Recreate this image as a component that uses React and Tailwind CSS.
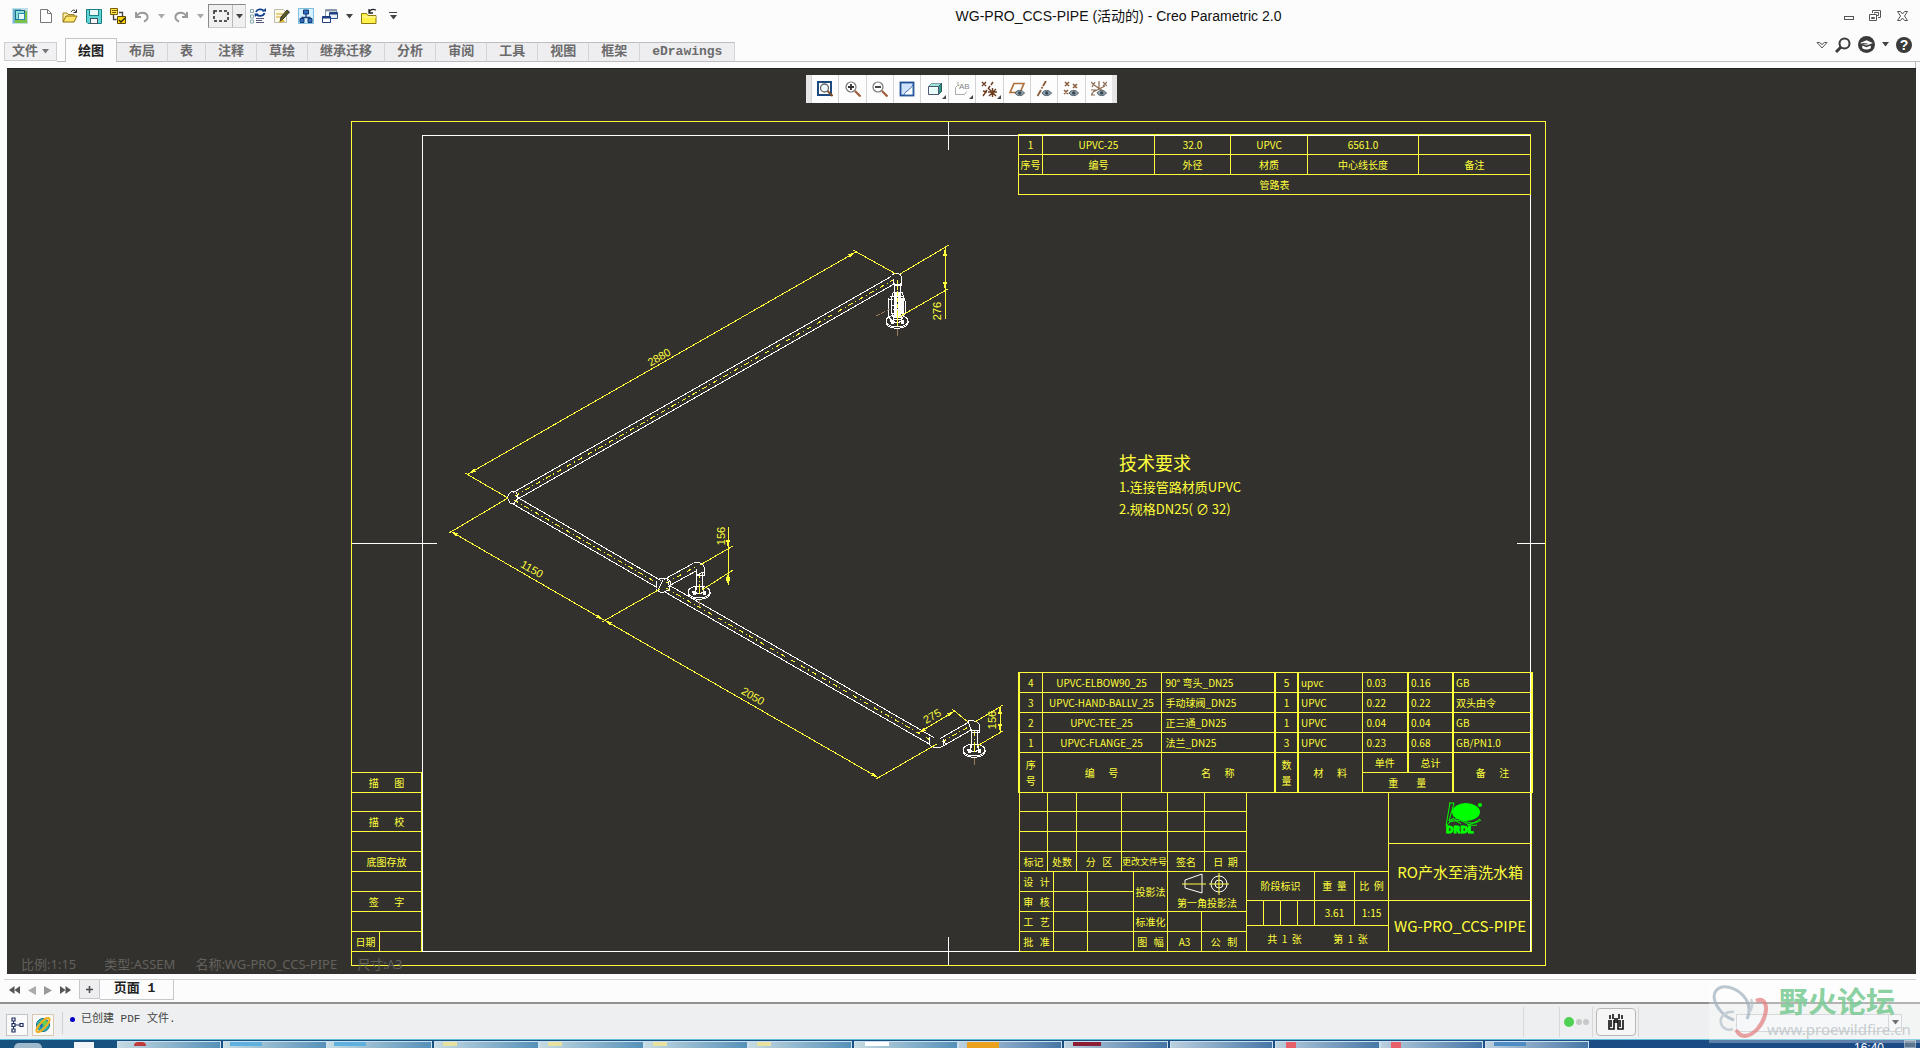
import React from "react";

const CAD = "font-['Noto_Sans_CJK_SC',sans-serif]";
const UI = "font-['Liberation_Mono','Noto_Sans_CJK_SC',monospace]";

/* ---------- small icons ---------- */

function Svg({ size = 16, children, className = "" }) {
  return (
    <svg width={size} height={size} viewBox="0 0 16 16" fill="none" className={"shrink-0 " + className} aria-hidden="true">
      {children}
    </svg>
  );
}

function Caret({ color = "#444" }) {
  return (
    <svg width="7" height="5" viewBox="0 0 7 5" className="shrink-0" aria-hidden="true">
      <path d="M0 0h7L3.5 4.5z" fill={color} />
    </svg>
  );
}

const Icons = {
  creo: (
    <Svg>
      <rect x="0" y="0" width="16" height="16" fill="#bfe0ea" />
      <path d="M1 1h8v14H1z" fill="#6fb7cf" />
      <path d="M3 12h12v3H3zM12 3h3v12h-3z" fill="#7cc04a" />
      <rect x="3.500" y="2.500" width="9" height="9" fill="#8fe0da" stroke="#1d6a86" />
      <rect x="6.500" y="5.500" width="6" height="6" fill="#e6fbf8" stroke="#2a8ab0" />
    </Svg>
  ),
  file: (
    <Svg>
      <path d="M2.500 1.500h7l4 4v9h-11z" fill="#fff" stroke="#777" />
      <path d="M9.500 1.500v4h4" stroke="#777" />
    </Svg>
  ),
  open: (
    <Svg>
      <path d="M1 14V5h4l1 1.500h6V9" fill="#fff2a8" stroke="#a08020" />
      <path d="M1 14l3-6h11l-3 6z" fill="#ffe46a" stroke="#8a6d10" />
      <path d="M9 4c1.500-2.500 4-2.500 5 0M14.500 1.500V4.500H11.500" stroke="#333" />
    </Svg>
  ),
  save: (
    <Svg>
      <path d="M.5 1.500h15v14H2l-1.500-1.500z" fill="#5fd6d4" stroke="#1b7f86" />
      <rect x="3.500" y="1.500" width="9" height="6" fill="#e9f8f8" stroke="#1b7f86" />
      <rect x="4.500" y="10.500" width="7" height="5" fill="#f5f5f5" stroke="#456" />
    </Svg>
  ),
  regen: (
    <Svg>
      <path d="M.5.500h7v6h-7z" fill="#ffe34d" stroke="#7a6000" />
      <path d="M2 2.500h5M2 4.500h4" stroke="#7a6000" />
      <path d="M7.500 8.500h8v7h-8z" fill="#ffd400" stroke="#5a4800" />
      <path d="M9 12l2 2 4-4" stroke="#222" strokeWidth="1.400" />
      <path d="M3.500 7v4.500h3M9 4.500h3.500V8" stroke="#444" strokeWidth="1.300" />
    </Svg>
  ),
  undo: (
    <Svg>
      <path d="M2 4v5h5M2.500 8.500C5 3.500 12 3.500 13.500 8c.5 3-1 4.500-3.500 5.500" stroke="#9a9a9a" strokeWidth="2" />
    </Svg>
  ),
  redo: (
    <Svg>
      <path d="M14 4v5H9M13.500 8.500C11 3.500 4 3.500 2.500 8c-.5 3 1 4.500 3.500 5.500" stroke="#9a9a9a" strokeWidth="2" />
    </Svg>
  ),
  update: (
    <Svg>
      <path d="M.5 1.500h3v3h-3zM.5 7h3v3h-3zM.5 12h3v3h-3z" stroke="#8aa" />
      <path d="M6 10.500h8M6 12.500h6M6 14.500h8" stroke="#557" />
      <path d="M6 4c1-3 6-3.500 8-1M14.500 5c-1 3.500-6 3.500-8 1.500" stroke="#0e3f8c" strokeWidth="1.800" />
      <path d="M12 3.500h4V0zM4.500 5.500h4L5 9z" fill="#0e3f8c" />
    </Svg>
  ),
  pen: (
    <Svg>
      <path d="M.5 1.500h9l3 3v10h-12z" fill="#fffbe0" stroke="#bbb" />
      <path d="M2 6h7M2 9h6" stroke="#d6a030" />
      <path d="M15.500 4L9 11l-3 3 1-5 6-7z" fill="#5b5b20" stroke="#333" />
      <path d="M4 15l5-3.500 2 2z" fill="#e0b020" />
    </Svg>
  ),
  model: (
    <Svg>
      <rect x=".5" y=".5" width="15" height="15" fill="#d6f1ff" stroke="#7fc0e0" />
      <path d="M8 6v3M4 12V9.500h8V12" stroke="#1c3f7c" strokeWidth="1.300" />
      <path d="M5.500 2h5v4h-5zM2 10.500h4v4H2zM10 10.500h4v4h-4z" fill="#2f6fc4" stroke="#16386c" />
    </Svg>
  ),
  windows: (
    <Svg>
      <path d="M3.500 1.500h11v8h-11z" fill="#fff" stroke="#8899aa" />
      <path d="M7.500 4.500h8v6h-8z" fill="#e8eef8" stroke="#2a4f94" />
      <path d="M.5 8.500h8v6h-8z" fill="#fff" stroke="#1d3f80" />
      <path d="M.5 9.500h8M7.500 5.500h8" stroke="#1d3f80" strokeWidth="2" />
      <path d="M3.500 2.500h11" stroke="#8899aa" strokeWidth="2" />
    </Svg>
  ),
  folder: (
    <Svg>
      <path d="M.5 5.500h5l1.500 2h8v8H.5z" fill="#fff04a" stroke="#8a7a10" />
      <path d="M1 9h14" stroke="#fff9b0" />
      <path d="M8 4.500c1-3 4-3.500 7-2.500M8 1v4h4" stroke="#222" strokeWidth="1.300" />
    </Svg>
  ),
};

const sep = <span className="h-6 w-px shrink-0 bg-[#cfcfc0]" />;

function QuickButton({ label, children }) {
  return (
    <button aria-label={label} className="flex h-5 items-center justify-center">
      {children}
    </button>
  );
}

function QuickAccess() {
  return (
    <div className="flex h-8 shrink-0 items-center pl-3">
      <QuickButton label="Creo">{Icons.creo}</QuickButton>
      <span className="ml-1">{sep}</span>
      <div className="ml-1.5 flex items-center gap-2">
        <QuickButton label="新建">{Icons.file}</QuickButton>
        <QuickButton label="打开">{Icons.open}</QuickButton>
        <QuickButton label="保存">{Icons.save}</QuickButton>
        <QuickButton label="重新生成">{Icons.regen}</QuickButton>
        <QuickButton label="撤消">{Icons.undo}</QuickButton>
        <Caret color="#aaa" />
        <QuickButton label="重做">{Icons.redo}</QuickButton>
        <Caret color="#aaa" />
      </div>
      <button aria-label="选择框" className="ml-1 flex h-6 items-stretch border border-t-[#888] border-r-[#ccc] border-b-[#ccc] border-l-[#888] bg-[#f0f0f0]">
        <span className="flex w-[23px] items-center justify-center">
          <svg width="16" height="12" viewBox="0 0 16 12" fill="none" aria-hidden="true">
            <rect x="1" y="1" width="14" height="10" stroke="#222" strokeWidth="1.500" strokeDasharray="3 2" />
          </svg>
        </span>
        <span className="flex w-[13px] items-center justify-center border-l border-[#bbb]">
          <Caret />
        </span>
      </button>
      <div className="ml-1 flex items-center gap-2">
        <QuickButton label="更新">{Icons.update}</QuickButton>
        <QuickButton label="编辑">{Icons.pen}</QuickButton>
        <QuickButton label="模型">{Icons.model}</QuickButton>
        <QuickButton label="窗口">{Icons.windows}</QuickButton>
        <Caret />
        <QuickButton label="关闭窗口">{Icons.folder}</QuickButton>
      </div>
      <span className="ml-1">{sep}</span>
      <button aria-label="自定义" className="ml-2 flex flex-col items-center gap-0.5">
        <span className="h-px w-2 bg-[#444]" />
        <Caret />
      </button>
    </div>
  );
}

function TitleBar() {
  return (
    <header className="flex h-8 items-center">
      <QuickAccess />
      <h1 className="flex-1 text-center font-['Liberation_Sans','Noto_Sans_CJK_SC',sans-serif] text-[14px] leading-4 text-[#111]">
        WG-PRO_CCS-PIPE (活动的) - Creo Parametric 2.0
      </h1>
      <div className="flex w-20 shrink-0 items-center gap-3.5 pl-1">
        <button aria-label="最小化" className="flex h-4 items-end pb-1">
          <span className="h-1 w-2.5 border border-[#555]" />
        </button>
        <button aria-label="还原">
          <svg width="14" height="14" viewBox="0 0 14 14" fill="none" aria-hidden="true">
            <path d="M4.500 4V1.500h8v7H10M6.500 4.500v-1h4v3H9" stroke="#555" />
            <path d="M1.500 5.500h7v6h-7zM3.500 8.500h3v1h-3z" stroke="#555" />
          </svg>
        </button>
        <button aria-label="关闭">
          <svg width="13" height="12" viewBox="0 0 13 12" fill="none" aria-hidden="true">
            <path d="M1.500 1.500h3l2 2.500 2-2.500h3L8.500 6l3 4.500h-3l-2-2.500-2 2.500h-3l3-4.500z" stroke="#555" />
          </svg>
        </button>
      </div>
    </header>
  );
}

const TABS = ["布局", "表", "注释", "草绘", "继承迁移", "分析", "审阅", "工具", "视图", "框架", "eDrawings"];

function Ribbon() {
  return (
    <nav className={"flex h-[30px] items-end pl-1 text-[13px] leading-4 font-bold text-[#6b6b6b] " + UI}>
      <button className="mb-px flex h-[19px] items-center border border-[#cfcfcf] bg-[#f1f1f3] px-[7px]">
        文件
        <span className="ml-1">
          <Caret color="#777" />
        </span>
      </button>
      <div className="flex h-6 w-2 shrink-0 border-b border-[#bdbdbd]" />
      <button className="h-6 border border-b-0 border-[#c4c4c4] bg-[#fcfcfc] px-3 pt-0.5 text-[#222]">绘图</button>
      {TABS.map((t) => (
        <button key={t} className="h-5 border-y border-r border-[#bdbdbd] border-r-[#d4d4d8] bg-[#eeeef1] px-3">
          {t}
        </button>
      ))}
      <div className="flex h-6 flex-1 items-start justify-end border-b border-[#bdbdbd] pr-2">
        <div className="-mt-0.5 flex items-center gap-[7px]">
          <button aria-label="折叠">
            <svg width="12" height="8" viewBox="0 0 12 8" fill="none" aria-hidden="true">
              <path d="M1 1.500h2.500l2.500 2 2.500-2H11L6 7z" stroke="#555" />
            </svg>
          </button>
          <button aria-label="搜索">
            <Svg>
              <circle cx="9.500" cy="6.500" r="5" stroke="#3b3b3b" strokeWidth="2" />
              <path d="M6 10l-5 5" stroke="#3b3b3b" strokeWidth="3" />
            </Svg>
          </button>
          <button aria-label="学习">
            <Svg size={17}>
              <circle cx="8" cy="8" r="8" fill="#3b3b3b" />
              <path d="M2 6.500L8 4l6 2.500L8 9z" fill="#fff" />
              <path d="M4 9v2.500c2.500 1.500 5.500 1.500 8 0V9l-4 1.500z" fill="#fff" />
              <path d="M4 7l5 .5" stroke="#3b3b3b" />
            </Svg>
          </button>
          <Caret />
          <button aria-label="帮助" className="flex size-4 items-center justify-center rounded-full bg-[#3b3b3b] font-['Liberation_Sans',sans-serif] text-[14px] leading-4 text-white">
            ?
          </button>
        </div>
      </div>
    </nav>
  );
}

/* ---------- graphics toolbar ---------- */

const eye = (
  <g>
    <path d="M6 12c2-3.500 7-3.500 9.500 0-2.500 3.500-7.500 3.500-9.500 0z" fill="#8fa0ac" stroke="#56646e" />
    <circle cx="10.700" cy="12" r="1.700" fill="#3a4750" />
  </g>
);

const VIEW_TOOLS = [
  ["重新调整", <Svg><rect x="1" y="1" width="13" height="13" fill="#fff" stroke="#1c4a80" strokeWidth="2" /><circle cx="7.500" cy="7" r="4" fill="#eef6ff" stroke="#666" strokeWidth="1.300" /><path d="M10.500 10l5 5" stroke="#7a4a2a" strokeWidth="2" /></Svg>],
  ["放大", <Svg><circle cx="6" cy="6" r="5" fill="#fff" stroke="#777" strokeWidth="1.200" /><path d="M3 6h6M6 3v6" stroke="#333" strokeWidth="1.800" /><path d="M10 10l5.500 5.500" stroke="#a05a3a" strokeWidth="2.200" /></Svg>],
  ["缩小", <Svg><circle cx="6" cy="6" r="5" fill="#fff" stroke="#777" strokeWidth="1.200" /><path d="M3 6h6" stroke="#333" strokeWidth="1.800" /><path d="M10 10l5.500 5.500" stroke="#a05a3a" strokeWidth="2.200" /></Svg>],
  ["重画", <Svg><rect x="1.500" y="1.500" width="13" height="13" fill="#cfe2fb" stroke="#1f4f94" strokeWidth="1.800" /><path d="M5 14c1-4 4-3 9-10v10z" fill="#fff" stroke="#3b6aa8" /></Svg>],
  ["显示样式", <Svg><path d="M1.500 5.500l3-3h10v8l-3 3h-10z" fill="#e8fffa" stroke="#557" /><path d="M1.500 5.500l3-3h10l-3 3z" fill="#9be3d4" /><path d="M11.500 5.500l3-3v8l-3 3z" fill="#2f9a86" stroke="#2a5a5a" /><path d="M1.500 5.500h10v8" stroke="#557" /></Svg>],
  ["注释显示", <Svg><path d="M1.500 13.500v-7l2-2h2M1.500 13.500h9l2-3M4 4V1" stroke="#aaa" /><text x="5" y="8" fontSize="8" fill="#888" fontFamily="Liberation Sans, sans-serif">AB</text></Svg>],
  ["基准显示", <Svg><path d="M1 1l4 4M5 1L1 5M12 1l-2 3M9 5L7 8M6 9l-4 6M2 10l4 1M8 8l7 7M15 8l-7 7M7 11h9M11.500 7v9" stroke="#6b3d1e" strokeWidth="1.400" /></Svg>],
  ["平面显示", <Svg><path d="M5 2.500h10l-4 9H1z" fill="#fff" stroke="#b0703c" strokeWidth="1.700" />{eye}</Svg>],
  ["轴显示", <Svg><path d="M10 0L7 5M6.500 6l-1 1.500M5 9l-3.500 6" stroke="#8a5a38" strokeWidth="1.800" />{eye}</Svg>],
  ["点显示", <Svg><path d="M2 1l4 4M6 1L2 5M10 3l4 4M14 3l-4 4M1 9l4 4M5 9l-4 4" stroke="#8a5a38" strokeWidth="1.500" />{eye}</Svg>],
  ["坐标系显示", <Svg><path d="M0 1l3 3M4 1L1 6M12 1l4 4M16 1l-4 4M8 0v8M2 11l12-6M3 4l9 6M0 9h4l-4 5h4" stroke="#8a6a50" strokeWidth="1.200" />{eye}</Svg>],
];

function ViewToolbar() {
  return (
    <div className="relative z-10 mt-1.5 flex h-7 w-[311px] border-x-[5px] border-[#e6e6e6] bg-[#fdfdfd]" role="toolbar">
      {VIEW_TOOLS.map(([label, icon], i) => (
        <button key={label} aria-label={label} className="relative flex flex-1 items-center justify-center border-l border-[#d4d4d4]">
          {icon}
          {i > 3 && i < 7 && (
            <span className="absolute right-0.5 bottom-1 size-0 border-b-4 border-l-4 border-b-[#444] border-l-transparent" />
          )}
        </button>
      ))}
    </div>
  );
}

/* ---------- drawing sheet ---------- */

const Y = "#ffff3c";

function Table({ cols, children, className = "" }) {
  return (
    <table className={"table-fixed border-collapse text-center text-[10px] leading-3 text-[#ffff3c] " + CAD + " " + className}>
      <colgroup>
        {cols.map((c, i) => (
          <col key={i} className={c} />
        ))}
      </colgroup>
      <tbody>{children}</tbody>
    </table>
  );
}

function C({ h = "h-5", className = "", ...rest }) {
  return <td className={"border border-[#ffff3c] p-0 whitespace-pre " + h + " " + className} {...rest} />;
}

function PipeTable() {
  return (
    <Table className="absolute top-[12px] right-[14px] w-[512px]" cols={["w-[24px]", "w-[112px]", "w-[76px]", "w-[77px]", "w-[111px]", "w-[112px]"]}>
      <tr>
        {["1", "UPVC-25", "32.0", "UPVC", "6561.0", ""].map((t, i) => (
          <C key={i}>{t}</C>
        ))}
      </tr>
      <tr>
        {["序号", "编号", "外径", "材质", "中心线长度", "备注"].map((t) => (
          <C key={t}>{t}</C>
        ))}
      </tr>
      <tr>
        <C colSpan={6}>管路表</C>
      </tr>
    </Table>
  );
}

const BOM = [
  ["4", "UPVC-ELBOW90_25", "90° 弯头_DN25", "5", "upvc", "0.03", "0.16", "GB"],
  ["3", "UPVC-HAND-BALLV_25", "手动球阀_DN25", "1", "UPVC", "0.22", "0.22", "双头由令"],
  ["2", "UPVC-TEE_25", "正三通_DN25", "1", "UPVC", "0.04", "0.04", "GB"],
  ["1", "UPVC-FLANGE_25", "法兰_DN25", "3", "UPVC", "0.23", "0.68", "GB/PN1.0"],
];

const BOM_CELL = [
  "border-l-2",
  "",
  "text-left pl-1",
  "border-x-2",
  "text-left pl-0.5",
  "text-left pl-1",
  "text-left pl-0.5 border-x-2",
  "text-left pl-0.5 border-r-2",
];

function BomTable() {
  return (
    <Table className="-ml-px w-[513px]" cols={["w-[23px]", "w-[119px]", "w-[114px]", "w-[23px]", "w-[64px]", "w-[46px]", "w-[45px]", "w-[79px]"]}>
      {BOM.map((row) => (
        <tr key={row[0]}>
          {row.map((t, i) => (
            <C key={i} className={BOM_CELL[i]}>{t}</C>
          ))}
        </tr>
      ))}
      <tr>
        <C rowSpan={2} className="border-l-2 leading-4">{"序\n号"}</C>
        <C rowSpan={2}>{"编      号"}</C>
        <C rowSpan={2}>{"名      称"}</C>
        <C rowSpan={2} className="border-x-2 leading-4">{"数\n量"}</C>
        <C rowSpan={2}>{"材      料"}</C>
        <C>单件</C>
        <C className="border-x-2">总计</C>
        <C rowSpan={2} className="border-r-2">{"备      注"}</C>
      </tr>
      <tr>
        <C colSpan={2} className="border-r-2">{"重        量"}</C>
      </tr>
    </Table>
  );
}

function Projection() {
  return (
    <svg width="50" height="22" viewBox="0 0 50 22" fill="none" className="mx-auto" aria-hidden="true">
      <path d="M3 7l17-6v19L3 15z" stroke="#fff" />
      <path d="M0 11h24" stroke={Y} />
      <circle cx="37" cy="11" r="8" stroke="#fff" />
      <circle cx="37" cy="11" r="4" stroke="#fff" />
      <path d="M27 11h20M37 0v22" stroke={Y} />
    </svg>
  );
}

function CompanyLogo() {
  return (
    <svg width="38" height="34" viewBox="0 0 38 34" className="mx-auto" aria-label="DRDL">
      <ellipse cx="21" cy="11" rx="14" ry="9" fill="#00ff00" />
      <circle cx="35" cy="4" r="2" fill="#00ff00" />
      <path d="M4 2h5M5 2L1 25M9 2L4 20l5-3M1 25c6-7 12-9 17-6s11 5 18 0M4 20c6 1 10-2 15 1s9 4 13 3M10 19l6 4M22 24c5-1 9-3 13-6" stroke="#00ff00" fill="none" />
      <text x="1" y="32" fontSize="9" fontWeight="900" fill="#00ff00" stroke="#00ff00" fontFamily="DejaVu Sans, sans-serif">DRDL</text>
    </svg>
  );
}

const blank = (n, h) => Array.from({ length: n }, (_, i) => <C key={i} h={h} />);

function TitleBlock() {
  return (
    <div className="-mt-px flex">
      <div className="w-[228px]">
        <Table className="w-[228px]" cols={["w-[28px]", "w-[29px]", "w-[45px]", "w-[46px]", "w-[37px]", "w-[42px]"]}>
          <tr>{blank(6, "h-[19px]")}</tr>
          <tr>{blank(6)}</tr>
          <tr>{blank(6)}</tr>
          <tr>
            {["标记", "处数", "分   区"].map((t) => <C key={t}>{t}</C>)}
            <C className="text-[9px]">更改文件号</C>
            <C>签名</C>
            <C>{"日  期"}</C>
          </tr>
        </Table>
        <Table className="-mt-px w-[228px]" cols={["w-[34px]", "w-[34px]", "w-[46px]", "w-[34px]", "w-[34px]", "w-[45px]"]}>
          <tr>
            <C>{"设   计"}</C>
            <C />
            <C />
            <C rowSpan={2}>投影法</C>
            <C colSpan={2} rowSpan={2} className="leading-4">
              <Projection />第一角投影法
            </C>
          </tr>
          <tr><C>{"审   核"}</C><C /><C /></tr>
          <tr><C>{"工   艺"}</C><C /><C /><C>标准化</C><C /><C /></tr>
          <tr>
            <C>{"批   准"}</C><C /><C />
            <C>{"图   幅"}</C>
            <C>A3</C>
            <C>{"公   制"}</C>
          </tr>
        </Table>
      </div>
      <Table className="-ml-px w-[143px]" cols={["w-[17px]", "w-[17px]", "w-[17px]", "w-[17px]", "w-[40px]", "w-[34px]"]}>
        <tr><C h="h-[79px]" colSpan={6} /></tr>
        <tr>
          <C h="h-[29px]" colSpan={4}>阶段标识</C>
          <C>{"重  量"}</C>
          <C>{"比  例"}</C>
        </tr>
        <tr>
          <C h="h-[25px]" /><C /><C /><C />
          <C>3.61</C>
          <C>1:15</C>
        </tr>
        <tr>
          <C h="h-[26px]" colSpan={6}>{"共  1  张              第  1  张"}</C>
        </tr>
      </Table>
      <Table className="-ml-px w-[143px]" cols={["w-[143px]"]}>
        <tr><C h="h-[51px]" className="pl-2"><CompanyLogo /></C></tr>
        <tr><C h="h-[57px]" className="text-[15px] leading-5">RO产水至清洗水箱</C></tr>
        <tr><C h="h-[51px]" className="text-[15px] leading-5">WG-PRO_CCS-PIPE</C></tr>
      </Table>
    </div>
  );
}

function SideTable() {
  return (
    <Table className="absolute bottom-[13px] -left-px w-[71px]" cols={["w-[28px]", "w-[42px]"]}>
      {["描       图", "", "描       校", "", "底图存放", "", "签       字", ""].map((t, i) => (
        <tr key={i}><C colSpan={2} h={i === 1 ? "h-[19px]" : "h-5"}>{t}</C></tr>
      ))}
      <tr>
        <C>日期</C>
        <C />
      </tr>
    </Table>
  );
}

/* A pipe run: two white walls and a dashed axis between its end points. */
function Pipe({ a, b, w = 4 }) {
  const dx = b[0] - a[0];
  const dy = b[1] - a[1];
  const len = Math.hypot(dx, dy);
  const nx = (-dy / len) * w;
  const ny = (dx / len) * w;
  return (
    <g>
      <line x1={a[0] + nx} y1={a[1] + ny} x2={b[0] + nx} y2={b[1] + ny} stroke="#fff" />
      <line x1={a[0] - nx} y1={a[1] - ny} x2={b[0] - nx} y2={b[1] - ny} stroke="#fff" />
      <line x1={a[0]} y1={a[1]} x2={b[0]} y2={b[1]} stroke={Y} strokeDasharray="5 3 1 3" />
    </g>
  );
}

function Arrow({ x, y, angle }) {
  return <path d="M0 0l-8 -2v4z" fill={Y} transform={`translate(${x} ${y}) rotate(${angle})`} />;
}

function Dim({ x, y, angle, children }) {
  return (
    <text x="0" y="0" transform={`translate(${x} ${y}) rotate(${angle})`} textAnchor="middle" dominantBaseline="central" fontSize="11" fill={Y} fontFamily="Liberation Sans, sans-serif">
      {children}
    </text>
  );
}

function Flange({ x, y }) {
  return (
    <g fill="none" stroke="#fff">
      <ellipse cx={x} cy={y} rx="11" ry="6" />
      <path d={`M${x - 11} ${y}v2c2 7 20 7 22 0v-2`} />
      <path d={`M${x - 4} ${y - 5}v5c2 2 6 2 8 0v-5`} />
      <path d={`M${x - 7} ${y}h3M${x + 4} ${y}h3M${x - 6} ${y + 2}h3M${x + 4} ${y + 2}h3`} strokeWidth="2" />
      <path d={`M${x} ${y - 8}v10`} stroke={Y} />
      <path d={`M${x} ${y + 8}v7`} stroke="#9a7a58" />
    </g>
  );
}

function Geometry() {
  return (
    <svg className="absolute top-0 left-0" width="1194" height="844" viewBox="352 122 1194 844" fill="none" shapeRendering="crispEdges" aria-label="管路图">
      <path d="M422 135.500H1530.500V951.500H422.500V135" stroke="#fff" />
      <path d="M948.500 122V150M948.500 937V965M352 543.500H437M1517 543.500H1545" stroke="#fff" />

      <Pipe a={[515, 496]} b={[893, 280]} />
      <Pipe a={[514, 500]} b={[659, 584]} />
      <Pipe a={[666, 588]} b={[932, 741]} />
      <Pipe a={[666, 583]} b={[695, 567]} />
      <Pipe a={[699, 573]} b={[699, 590]} w={3} />
      <Pipe a={[942, 742]} b={[970, 726]} />
      <Pipe a={[974, 731]} b={[974, 748]} w={3} />
      <Pipe a={[897, 283]} b={[897, 296]} w={3} />

      <g stroke="#fff">
        <path d="M515 491c-5 0-8 4-7 8 1 3 2 5 4 5M516 492l3 7M519 497l-6 8" />
        <path d="M659 579l8-1 4 4-2 8-8 3-5-4M663 580l-5 10M667 578l3 10M657 581l-1 7" />
        <path d="M694 563c4-1 9 0 10 4v8h-8v-6M696 575l8-3" />
        <path d="M930 737l-1 7c3 4 9 5 14 2v-7M943 739l3 6" />
        <path d="M968 721c4-1 9 0 11 3v8h-8M968 721l3 9M971 730h8" />
        <path d="M892 275c3-3 8-2 9 1v9h-7l-1-6M894 284h7" />
      </g>

      <Flange x={699} y={592} />
      <Flange x={974} y={750} />
      <Flange x={897} y={321} />
      <g stroke="#fff">
        <path d="M893 293l-2 6v13l3 7h8l3-6v-12l-3-9zM888 298v19l4 3M888 299h5M900 302l5-3M890 296h14M891 305h13M893 309h11M892 313h10" />
        <path d="M895 293v25M899 293v25M902 298v16" strokeWidth="3" />
        <path d="M897 280v48" stroke={Y} strokeDasharray="4 2" />
        <path d="M876 316l16-8" stroke="#9a7a58" strokeDasharray="4 2" />
      </g>

      <g stroke={Y}>
        <path d="M508 498L465 473M896 274L853 250M468 474L856 252" />
        <path d="M900 274L949 245M899 317L948 289M945.500 247V319" />
        <path d="M508 498L449 533M660 589L602 622M937 744L876 779" />
        <path d="M450 531L604 620L879 778" />
        <path d="M700 565L733 546M702 590L733 570M728.500 527V585" />
        <path d="M968 722L952 709M918 733L955 711M975 722L1003 705M977 746L1003 731M1000.500 706V732" />
      </g>

      <Arrow x={468} y={474} angle={150} />
      <Arrow x={856} y={252} angle={-30} />
      <Arrow x={945} y={248} angle={-90} />
      <Arrow x={945} y={290} angle={90} />
      <Arrow x={450} y={531} angle={210} />
      <Arrow x={604} y={620} angle={30} />
      <Arrow x={604} y={620} angle={210} />
      <Arrow x={879} y={778} angle={30} />
      <Arrow x={728} y={548} angle={90} />
      <Arrow x={728} y={573} angle={-90} />
      <Arrow x={728} y={585} angle={90} />
      <Arrow x={918} y={733} angle={150} />
      <Arrow x={955} y={711} angle={-30} />
      <Arrow x={1000} y={706} angle={-90} />
      <Arrow x={1000} y={732} angle={90} />

      <Dim x={659} y={357} angle={-30}>2880</Dim>
      <Dim x={937} y={311} angle={-90}>276</Dim>
      <Dim x={532} y={569} angle={30}>1150</Dim>
      <Dim x={753} y={696} angle={30}>2050</Dim>
      <Dim x={721} y={536} angle={-90}>156</Dim>
      <Dim x={932} y={716} angle={-30}>275</Dim>
      <Dim x={992} y={720} angle={-90}>156</Dim>
    </svg>
  );
}

function Sheet() {
  return (
    <div className="absolute top-[52px] left-[344px] h-[845px] w-[1195px] border border-[#ffff3c]">
      <Geometry />
      <PipeTable />
      <div className={"absolute top-[328px] left-[767px] whitespace-pre text-[#ffff3c] " + CAD}>
        <p className="text-[18px] leading-6">技术要求</p>
        <p className="mt-0.5 text-[13px] leading-[22px]">1.连接管路材质UPVC</p>
        <p className="text-[13px] leading-[22px]">2.规格DN25( ∅ 32)</p>
      </div>
      <div className="absolute right-[14px] bottom-[13px] w-[512px]">
        <BomTable />
        <TitleBlock />
      </div>
      <SideTable />
    </div>
  );
}

function Canvas() {
  return (
    <main className="relative mr-1 ml-[7px] flex flex-1 items-start justify-center overflow-hidden border-t border-[#22211f] bg-[#33312d]">
      <Sheet />
      <ViewToolbar />
      <div className="absolute bottom-0.5 left-[14px] flex gap-5 font-['Noto_Sans','Noto_Sans_CJK_SC',sans-serif] text-[13px] leading-4 text-[#62615d]">
        <span className="mr-2">比例:1:15</span>
        <span>类型:ASSEM</span>
        <span>名称:WG-PRO_CCS-PIPE</span>
        <span>尺寸:A3</span>
      </div>
    </main>
  );
}

/* ---------- bottom bars ---------- */

function PageTabs() {
  return (
    <div className={"mr-1 ml-1 mt-[5px] flex h-[23px] items-start border-t border-[#d0d0d0] " + UI}>
      <div className="flex h-5 w-[75px] items-center justify-between pr-2 pl-[5px]">
        <button aria-label="第一页"><svg width="11" height="8" viewBox="0 0 11 8"><path d="M5.500 0v8L0 4zM11 0v8L5.500 4z" fill="#555" /></svg></button>
        <button aria-label="上一页"><svg width="8" height="9" viewBox="0 0 8 9"><path d="M8 0v9L0 4.500z" fill="#aaa" /></svg></button>
        <button aria-label="下一页"><svg width="8" height="9" viewBox="0 0 8 9"><path d="M0 0v9l8-4.500z" fill="#999" /></svg></button>
        <button aria-label="最后一页"><svg width="11" height="8" viewBox="0 0 11 8"><path d="M0 0v8l5.500-4zM5.500 0v8L11 4z" fill="#555" /></svg></button>
      </div>
      <button aria-label="新页面" className="flex h-[19px] w-[21px] items-center justify-center border border-t-0 border-[#c8c8cc] bg-[#eeeef1]">
        <svg width="7" height="7" viewBox="0 0 7 7"><path d="M3 0h1v7H3zM0 3h7v1H0z" stroke="#555" strokeWidth="0.600" fill="#444" /></svg>
      </button>
      <button className="h-5 w-[74px] border-r border-b border-[#c8c8c8] pb-0.5 pr-1 text-[13px] leading-4 font-bold text-[#222]">页面 1</button>
    </div>
  );
}

function Watermark() {
  return (
    <div className="pointer-events-none absolute right-0 bottom-[5px] flex h-[62px] w-[211px] bg-white/30">
      <svg width="62" height="62" viewBox="0 0 62 62" fill="none" className="shrink-0 opacity-70" aria-hidden="true">
        <path d="M38 38C46 20 28 4 13 6 2 9 4 20 10 28c4 6 9 9 15 11" stroke="#9fb0bd" strokeWidth="3" />
        <path d="M25 31c-8-1-15 5-13 11 1 5 6 8 12 6M42 18c2 4 1 10-2 14" stroke="#b4c0c8" strokeWidth="2.500" />
        <path d="M47 20c8-4 12 4 9 14-3 11-11 20-20 21-5 0-7-3-9-6" stroke="#e27c7c" strokeWidth="4" />
      </svg>
      <div className="flex flex-col whitespace-nowrap">
        <span className="pl-2 font-['Noto_Sans_CJK_SC',sans-serif] text-[29px] leading-[38px] font-bold text-[#7ccb96]/90">野火论坛</span>
        <span className="-ml-1 font-['Noto_Sans',sans-serif] text-[15px] leading-5 text-[#b9c1c6]/80">www.proewildfire.cn</span>
      </div>
    </div>
  );
}

function StatusBar() {
  return (
    <footer className="relative">
      <div className="flex h-[37px] border-t-2 border-[#929292] bg-[#eeeff0]">
        <div className="flex items-end gap-1 pb-[3px] pl-1.5">
          <button aria-label="模型树" className="flex size-[22px] items-center justify-center border border-[#c4c4c4] bg-[#fafafa]">
            <Svg>
              <path d="M3 1h3v3H3zM3 6.500h3v3H3zM3 12h3v3H3zM11 6.500h3v3h-3z" stroke="#1f2f60" strokeWidth="1.200" />
              <path d="M4.500 4v2.500M4.500 9.500V12M6 8h5" stroke="#1f2f60" />
            </Svg>
          </button>
          <button aria-label="浏览器" className="flex size-[22px] items-center justify-center border border-[#d8c9b0] bg-[#fafafa]">
            <Svg>
              <circle cx="8" cy="8" r="6.500" fill="#2fb5a8" stroke="#1a6f8a" />
              <path d="M8 2c3 1 5 3 5 6L6 9z" fill="#5fd050" />
              <path d="M4 5l4 2-2 5z" fill="#1d5fc0" />
              <ellipse cx="8" cy="8" rx="9" ry="3" transform="rotate(-48 8 8)" stroke="#f0b020" strokeWidth="2" />
            </Svg>
          </button>
        </div>
        <span className="mt-2 ml-2 h-[22px] w-px bg-[#d2d2d2]" />
        <p className={"flex h-6 flex-1 items-center pt-1.5 pl-[7px] text-[11px] leading-4 text-[#444] " + UI}>
          <span className="mr-1.5 size-[5px] rounded-full bg-[#0000c8]" />
          已创建 PDF 文件.
        </p>
        <div className="flex items-center">
          <span className="mr-[35px] h-[30px] w-px bg-[#d8d8d8]" />
          <span className="mr-1 h-[30px] w-px bg-[#d8d8d8]" />
          <span className="size-2.5 rounded-full bg-[#4fd153]" />
          <span className="ml-0.5 size-1.5 rounded-full bg-[#c8c8c8]" />
          <span className="ml-px size-1.5 rounded-full bg-[#c8c8c8]" />
          <span className="ml-[3px] h-[30px] w-px bg-[#d8d8d8]" />
          <button aria-label="查找" className="ml-[3px] flex h-7 w-10 items-center justify-center rounded-sm border border-[#b8b8b8] bg-[#f6f6f6]">
            <svg width="16" height="16" viewBox="0 0 16 16" fill="none" aria-hidden="true">
              <path d="M2 1v4M5 0v5M11 0v5M14 1v4M7 4v5M9 4v5M1 6v9h5V6M10 6v9h5V6M3 6v7M12 6v7" stroke="#111" strokeWidth="1.600" />
            </svg>
          </button>
          <span className="mr-[97px] ml-0.5 h-[30px] w-px bg-[#d8d8d8]" />
          <div className="relative mt-0.5 mr-[18px]">
            <select aria-label="选择过滤器" className="block h-[18px] w-[166px] appearance-none border border-[#c4c8cc] bg-[#f3f4f5]" />
            <span className="pointer-events-none absolute top-0 right-0 flex h-[18px] w-[14px] items-center justify-center border-l border-[#c4c8cc]">
              <Caret color="#333" />
            </span>
          </div>
        </div>
      </div>
      <Taskbar />
      <Watermark />
    </footer>
  );
}

const GLASS = "h-[7px] border border-b-0 border-[#c9e0ee] bg-linear-to-r ";
const LIGHT = GLASS + "from-[#c6dbe2] to-[#5591b8]";
const BLUE = GLASS + "from-[#bcd0de] to-[#4577a6]";

const TASKS = [
  ["w-[104px] ml-0", LIGHT, "ml-4 h-1 w-3 rounded-t-full bg-[#c03a3a]"],
  ["w-[104px] ml-0.5", LIGHT, "ml-1.5 h-1 w-8 bg-[#5fb2e0]"],
  ["w-[105px]", LIGHT, "ml-1.5 h-1 w-8 bg-[#5fb2e0]"],
  ["w-[105px] ml-0.5", LIGHT, "ml-2 h-1 w-3.5 bg-[#e8e2a0]"],
  ["w-[105px]", LIGHT, "ml-2 h-1 w-3.5 bg-[#e8e2a0]"],
  ["w-[104px]", LIGHT, "ml-2 h-1 w-3.5 bg-[#e8e2a0]"],
  ["w-[104px]", LIGHT, "ml-2 h-1 w-3.5 bg-[#e8e2a0]"],
  ["w-[104px] ml-0.5", LIGHT, "ml-2.5 h-1 w-6 bg-white"],
  ["w-[104px]", BLUE, "ml-2 h-full w-8 bg-[#eaa21e]"],
  ["w-[104px] ml-0.5", BLUE, "ml-2 h-1 w-7 bg-[#8c1f35]"],
  ["w-[103px] ml-0.5", BLUE, ""],
  ["w-[105px] ml-0.5", BLUE, "ml-2.5 h-full w-2.5 bg-[#e8606a]"],
  ["w-[103px]", BLUE, "ml-2.5 h-full w-2.5 bg-[#e8606a]"],
  ["w-[104px] ml-0.5", BLUE, "ml-2 h-1 w-8 bg-[#4f8cc4]"],
];

function Taskbar() {
  return (
    <div className="flex h-[9px] items-end overflow-hidden border-t border-[#5fc0dc] bg-linear-to-r from-[#17527f] via-[#1c4f80] to-[#1b4a86]">
      <div className="flex w-[117px] shrink-0 items-end">
        <span className="ml-3.5 h-[5px] w-7 rounded-t-full bg-[#9fb9cc]" />
        <span className="ml-8 h-1.5 w-5 bg-[#f0f4f6]" />
      </div>
      {TASKS.map(([size, glass, mark], i) => (
        <div key={i} className={"flex shrink-0 items-start overflow-hidden " + size + " " + glass}>
          <span className={mark} />
        </div>
      ))}
      <div className="flex h-2 flex-1 items-start justify-end gap-5 pr-1 font-['Liberation_Sans',sans-serif] text-[12px] leading-4 text-white">
        <span>16:40</span>
        <span className="h-2 w-3 border border-[#8fa4b8] bg-[#5d7690]" />
      </div>
    </div>
  );
}

export default function App() {
  return (
    <div className="flex h-screen flex-col overflow-hidden bg-[#fcfcfc]">
      <TitleBar />
      <Ribbon />
      <div className="mx-1 h-1.5 shrink-0 border-r border-[#bdbdbd]" />
      <Canvas />
      <PageTabs />
      <StatusBar />
    </div>
  );
}
